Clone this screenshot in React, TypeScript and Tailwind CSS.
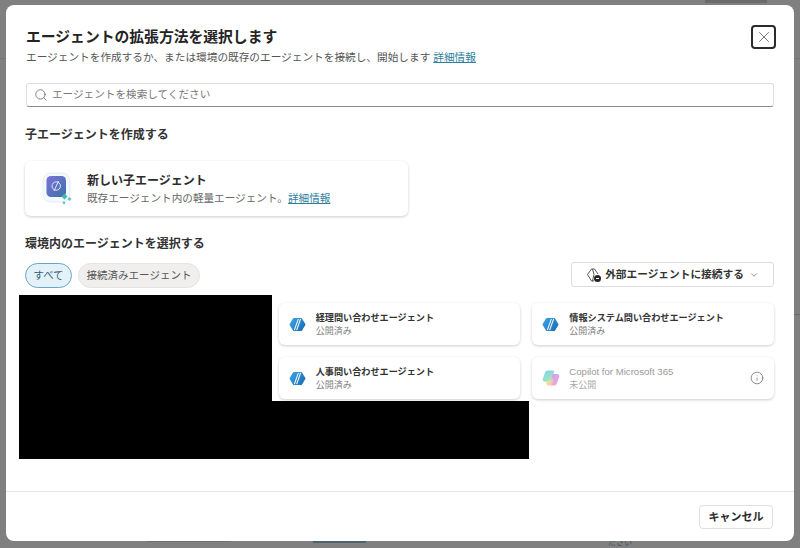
import { ChevronDown, Info, Search, X } from "lucide-react";

function AgentIcon() {
  return (
    <svg width="17" height="17" viewBox="0 0 18 18" className="shrink-0">
      <defs>
        <linearGradient id="hex" x1="0" y1="0" x2="1" y2="0.6">
          <stop offset="0" stopColor="#3da6e6" />
          <stop offset="1" stopColor="#1f70b8" />
        </linearGradient>
      </defs>
      <path d="M5.200 2h7.600c.5 0 .8.200 1 .6l3.500 5.800c.2.400.2.800 0 1.200l-3.500 5.800c-.2.400-.5.600-1 .6H5.200c-.5 0-.8-.2-1-.6L.7 9.600c-.2-.4-.2-.8 0-1.200l3.500-5.800c.2-.4.500-.6 1-.6z" fill="url(#hex)" />
      <path d="M9.900 3 5.700 15M12.300 3 8.100 15" stroke="#eef7fd" strokeWidth="1.200" fill="none" />
    </svg>
  );
}

function CopilotIcon() {
  return (
    <svg width="18" height="18" viewBox="0 0 18 18" className="shrink-0 opacity-75">
      <defs>
        <linearGradient id="cp1" x1="0" y1="0" x2="0.6" y2="1">
          <stop offset="0" stopColor="#4fc0f2" />
          <stop offset="1" stopColor="#8fe39a" />
        </linearGradient>
        <linearGradient id="cp2" x1="0.2" y1="0" x2="0.8" y2="1">
          <stop offset="0" stopColor="#b08af2" />
          <stop offset="1" stopColor="#f58ac4" />
        </linearGradient>
        <linearGradient id="cp3" x1="0" y1="0" x2="1" y2="0">
          <stop offset="0" stopColor="#f7dc62" />
          <stop offset="1" stopColor="#f7a6a0" />
        </linearGradient>
      </defs>
      <path d="M6 1.500h5c1.200 0 1.600.8 1 2L9 11c-.6 1.200-1.400 1.800-2.700 1.800H3c-1.800 0-2.600-1.300-2.200-3L3 3.800C3.500 2.300 4.500 1.500 6 1.500z" fill="url(#cp1)" />
      <path d="M10.500 5H15c1.800 0 2.700 1.300 2.200 3l-2.200 6.200c-.5 1.500-1.500 2.300-3 2.300H9c-1.200 0-1.600-.8-1-2l2-8c.1-.9.200-1.500.5-1.500z" fill="url(#cp2)" />
      <path d="M4.500 12.800h3.800L10 9l1.500 2.500-1 3.500c-.3 1-1 1.500-2 1.500H6c-1.500 0-2.200-1.700-1.500-3.700z" fill="url(#cp3)" />
    </svg>
  );
}

function ChildAgentIcon() {
  return (
    <svg width="32" height="36" viewBox="0 0 32 36" className="shrink-0">
      <defs>
        <linearGradient id="child" x1="0" y1="0" x2="1" y2="1">
          <stop offset="0" stopColor="#7a72d8" />
          <stop offset="1" stopColor="#3d72a8" />
        </linearGradient>
      </defs>
      <rect x="1" y="2" width="27" height="29" rx="8" fill="#f4f9fc" stroke="#e2eff5" />
      <rect x="4.500" y="5" width="19.500" height="21" rx="4.500" fill="url(#child)" />
      <circle cx="14.200" cy="15" r="4.200" fill="none" stroke="#e4e6fa" strokeWidth="1" />
      <path d="M12 20 16.500 10" stroke="#e4e6fa" strokeWidth="1" />
      <path d="M22.500 22.500l3 3-3 3-3-3z" fill="#3fb8b0" />
      <path d="M27.500 26l2 2-2 2-2-2z" fill="#5cc8c0" />
      <path d="M22 30l1.700 1.700-1.700 1.700-1.700-1.700z" fill="#5cc8c0" />
    </svg>
  );
}

function ExternalIcon() {
  return (
    <svg width="16" height="16" viewBox="0 0 16 16" className="shrink-0" fill="none">
      <path d="M5.500 2 1.500 7.500 5.500 14h2.500M5.500 2h3l3.500 5" stroke="#444" strokeWidth="0.9" />
      <path d="M6.500 2 8 7.500 6.500 14" stroke="#444" strokeWidth="0.9" />
      <circle cx="11.500" cy="11.500" r="3.500" fill="#242424" />
      <path d="M10 11.500h3" stroke="#fff" strokeWidth="1" />
    </svg>
  );
}

function AgentCard({ name, status }: { name: string; status: string }) {
  return (
    <div className="flex h-[42px] items-center gap-[10px] rounded-md bg-white pl-[10px] shadow-[0_1px_3px_rgba(0,0,0,0.2)]">
      <AgentIcon />
      <div className="flex flex-col">
        <span className="text-[9.150px] leading-[14px] font-semibold text-[#333]">{name}</span>
        <span className="text-[9px] leading-[13px] text-[#808080]">{status}</span>
      </div>
    </div>
  );
}

export default function App() {
  return (
    <div className="relative h-[548px] w-[800px] overflow-hidden bg-[#808080] pt-[5px] pl-[6px] font-['Liberation_Sans','Noto_Sans_CJK_JP',sans-serif]">
      {/* bits of the page behind the overlay */}
      <div className="absolute top-0 left-[705px] h-[3px] w-[62px] bg-[#6b6b6b]" />
      <div className="absolute top-[58px] left-0 h-px w-full bg-[#757575]" />
      <div className="absolute top-[314px] right-0 h-px w-[6px] bg-[#6a6a6a]" />
      <span className="absolute top-[537px] left-[608px] text-[8px] text-[#3f5560]">ださい</span>
      <div className="absolute top-[541px] left-[313px] h-[2px] w-[53px] bg-[#4d6470]" />
      <div className="absolute top-[541px] left-[147px] h-px w-[84px] bg-[#707070]" />

      <div className="relative flex h-[536px] w-[788px] flex-col rounded-lg bg-white">
        <div className="flex flex-1 flex-col px-5 pt-[21px]">
          <div className="flex justify-between">
            <div>
              <h1 className="text-[14.800px] leading-[22px] font-bold text-[#242424]">
                エージェントの拡張方法を選択します
              </h1>
              <p className="mt-px text-[10.660px] leading-[16px] text-[#555]">
                エージェントを作成するか、または環境の既存のエージェントを接続し、開始します{" "}
                <a className="text-[#2f7f9c] underline">詳細情報</a>
              </p>
            </div>
            <button className="mt-[-1px] mr-[-2px] flex h-[24px] w-[25px] items-center justify-center rounded-[4px] border-2 border-[#2b2b2b]">
              <X size={18} strokeWidth={0.9} className="shrink-0 text-[#333]" />
            </button>
          </div>

          <div className="mt-[18px] flex h-[24px] items-center gap-[5px] rounded-[3px] border border-[#e0e0e0] border-b-[#8a8a8a] pl-[7px]">
            <Search size={14} strokeWidth={1.200} className="text-[#555]" />
            <span className="ml-[-1px] text-[10.620px] text-[#777]">エージェントを検索してください</span>
          </div>

          <h2 className="mt-[20px] ml-[-1px] text-[12px] leading-[16px] font-semibold text-[#333]">
            子エージェントを作成する
          </h2>

          <div className="mt-[18px] ml-[-1px] flex h-[55px] w-[383px] items-center gap-[13px] rounded-md bg-white pl-[17px] shadow-[0_1px_3px_rgba(0,0,0,0.2)]">
            <ChildAgentIcon />
            <div className="flex flex-col">
              <span className="text-[12px] leading-[18px] font-semibold text-[#2b2b2b]">新しい子エージェント</span>
              <span className="text-[10.620px] leading-[16px] text-[#666]">
                既存エージェント内の軽量エージェント。<a className="text-[#2f7f9c] underline">詳細情報</a>
              </span>
            </div>
          </div>

          <h2 className="mt-[20px] ml-[-1px] text-[12px] leading-[16px] font-semibold text-[#333]">
            環境内のエージェントを選択する
          </h2>

          <div className="mt-[11px] flex items-start justify-between">
            <div className="ml-[-1px] flex gap-[6px]">
              <span className="flex h-[25px] w-[47px] items-center justify-center rounded-full border border-[#6ba6c8] bg-[#e3f1f9] text-[10.400px] text-[#33617c]">
                すべて
              </span>
              <span className="flex h-[25px] w-[122px] items-center justify-center rounded-full border border-[#e6e4e2] bg-[#f1efed] text-[10.500px] text-[#555]">
                接続済みエージェント
              </span>
            </div>
            <button className="mt-[-1px] flex h-[25px] w-[203px] items-center justify-center gap-[3px] rounded-[3px] border border-[#dcdcdc] text-[10.700px] font-semibold text-[#333]">
              <ExternalIcon />
              外部エージェントに接続する
              <ChevronDown size={10} strokeWidth={1.500} className="ml-[2px] text-[#555]" />
            </button>
          </div>

          <div className="mt-[15px] ml-[-1px] grid grid-cols-3 gap-[12px]">
            <div className="h-[42px]" />
            <AgentCard name="経理問い合わせエージェント" status="公開済み" />
            <AgentCard name="情報システム問い合わせエージェント" status="公開済み" />
            <div className="h-[42px]" />
            <AgentCard name="人事問い合わせエージェント" status="公開済み" />
            <div className="flex h-[42px] items-center gap-[9px] rounded-md bg-white px-[10px] shadow-[0_1px_3px_rgba(0,0,0,0.2)]">
              <CopilotIcon />
              <div className="flex flex-1 flex-col">
                <span className="text-[9.600px] leading-[14px] text-[#9a9a9a]">Copilot for Microsoft 365</span>
                <span className="text-[9px] leading-[13px] text-[#aaa]">未公開</span>
              </div>
              <Info size={14} strokeWidth={1} className="text-[#444]" />
            </div>
          </div>
        </div>

        <div className="flex h-[50px] items-center justify-end border-t border-[#e4e4e4] pt-px pr-[21px]">
          <button className="h-[24px] w-[74px] rounded-[4px] border border-[#e0e0e0] text-[11px] font-semibold text-[#2b2b2b]">
            キャンセル
          </button>
        </div>
      </div>

      {/* redacted blocks sit on top of the dialog */}
      <div className="absolute top-[295px] left-[19px] h-[106px] w-[253px] bg-black" />
      <div className="absolute top-[401px] left-[19px] h-[58px] w-[510px] bg-black" />
    </div>
  );
}
